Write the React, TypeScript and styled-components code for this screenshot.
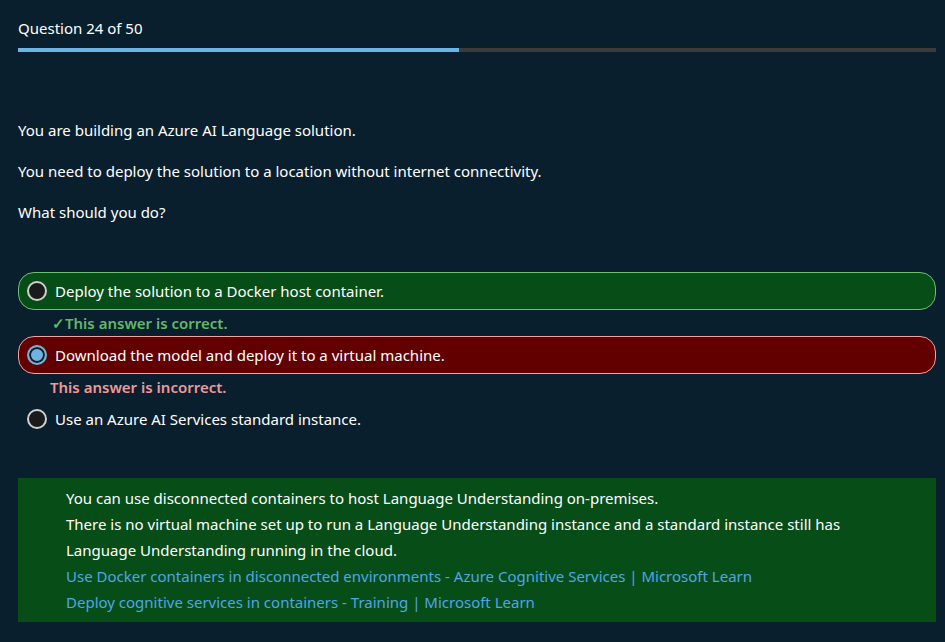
import styled, { createGlobalStyle } from 'styled-components';

const Global = createGlobalStyle`
  html, body { margin: 0; padding: 0; background: #0a1f2e; }
  body {
    font-family: "Segoe UI", "Noto Sans", sans-serif;
    font-size: 15px;
    color: #ffffff;
  }
`;

const Page = styled.div`
  padding: 16px 9px 20px 18px;
`;

const Header = styled.div`
  font-size: 15px;
  line-height: 24px;
`;

const Progress = styled.div`
  margin-top: 8px;
  height: 4px;
  background: #3b3b3b;
`;

const ProgressFill = styled.div`
  height: 100%;
  background: #6cb4e4;
`;

const Stem = styled.div`
  margin-top: 66px;
  display: flex;
  flex-direction: column;
  gap: 17px;
`;

const StemLine = styled.p`
  margin: 0;
  line-height: 24px;
`;

const Options = styled.div`
  margin-top: 48px;
  display: flex;
  flex-direction: column;
`;

const Option = styled.div<{ $state?: 'correct' | 'wrong' }>`
  display: flex;
  align-items: center;
  gap: 8px;
  height: 38px;
  box-sizing: border-box;
  padding: 0 8px;
  border-radius: 16px;
  border: 1px solid
    ${(p) => (p.$state === 'correct' ? '#6fbf73' : p.$state === 'wrong' ? '#f0a3a3' : 'transparent')};
  background: ${(p) =>
    p.$state === 'correct' ? '#064d18' : p.$state === 'wrong' ? '#620000' : 'transparent'};
`;

const Radio = styled.span<{ $checked?: boolean }>`
  width: 20px;
  height: 20px;
  box-sizing: border-box;
  border-radius: 50%;
  flex: none;
  border: 2px solid ${(p) => (p.$checked ? '#6cb4e4' : '#d0d0d0')};
  background: ${(p) => (p.$checked ? '#6cb4e4' : '#1b1b1b')};
  box-shadow: ${(p) => (p.$checked ? 'inset 0 0 0 2px #1b1b1b' : 'none')};
`;

const Feedback = styled.div<{ $ok?: boolean }>`
  height: 26px;
  display: flex;
  align-items: center;
  padding-left: ${(p) => (p.$ok ? '34px' : '32px')};
  font-weight: 600;
  color: ${(p) => (p.$ok ? '#63b868' : '#ec9a9a')};
`;

const Explain = styled.div`
  margin-top: 40px;
  background: #064d18;
  padding: 7px 48px 7px 48px;
  line-height: 26px;
`;

const Link = styled.a`
  display: block;
  color: #4ea6ea;
  text-decoration: none;
`;

export default function App() {
  return (
    <>
      <Global />
      <Page>
        <Header>Question 24 of 50</Header>
        <Progress>
          <ProgressFill style={{ width: `${(24 / 50) * 100}%` }} />
        </Progress>
        <Stem>
          <StemLine>You are building an Azure AI Language solution.</StemLine>
          <StemLine>You need to deploy the solution to a location without internet connectivity.</StemLine>
          <StemLine>What should you do?</StemLine>
        </Stem>
        <Options>
          <Option $state="correct">
            <Radio />
            Deploy the solution to a Docker host container.
          </Option>
          <Feedback $ok>✓This answer is correct.</Feedback>
          <Option $state="wrong">
            <Radio $checked />
            Download the model and deploy it to a virtual machine.
          </Option>
          <Feedback>This answer is incorrect.</Feedback>
          <Option>
            <Radio />
            Use an Azure AI Services standard instance.
          </Option>
        </Options>
        <Explain>
          <div>You can use disconnected containers to host Language Understanding on-premises.</div>
          <div>
            There is no virtual machine set up to run a Language Understanding instance and a standard instance still has
            Language Understanding running in the cloud.
          </div>
          <Link href="#">Use Docker containers in disconnected environments - Azure Cognitive Services | Microsoft Learn</Link>
          <Link href="#">Deploy cognitive services in containers - Training | Microsoft Learn</Link>
        </Explain>
      </Page>
    </>
  );
}
